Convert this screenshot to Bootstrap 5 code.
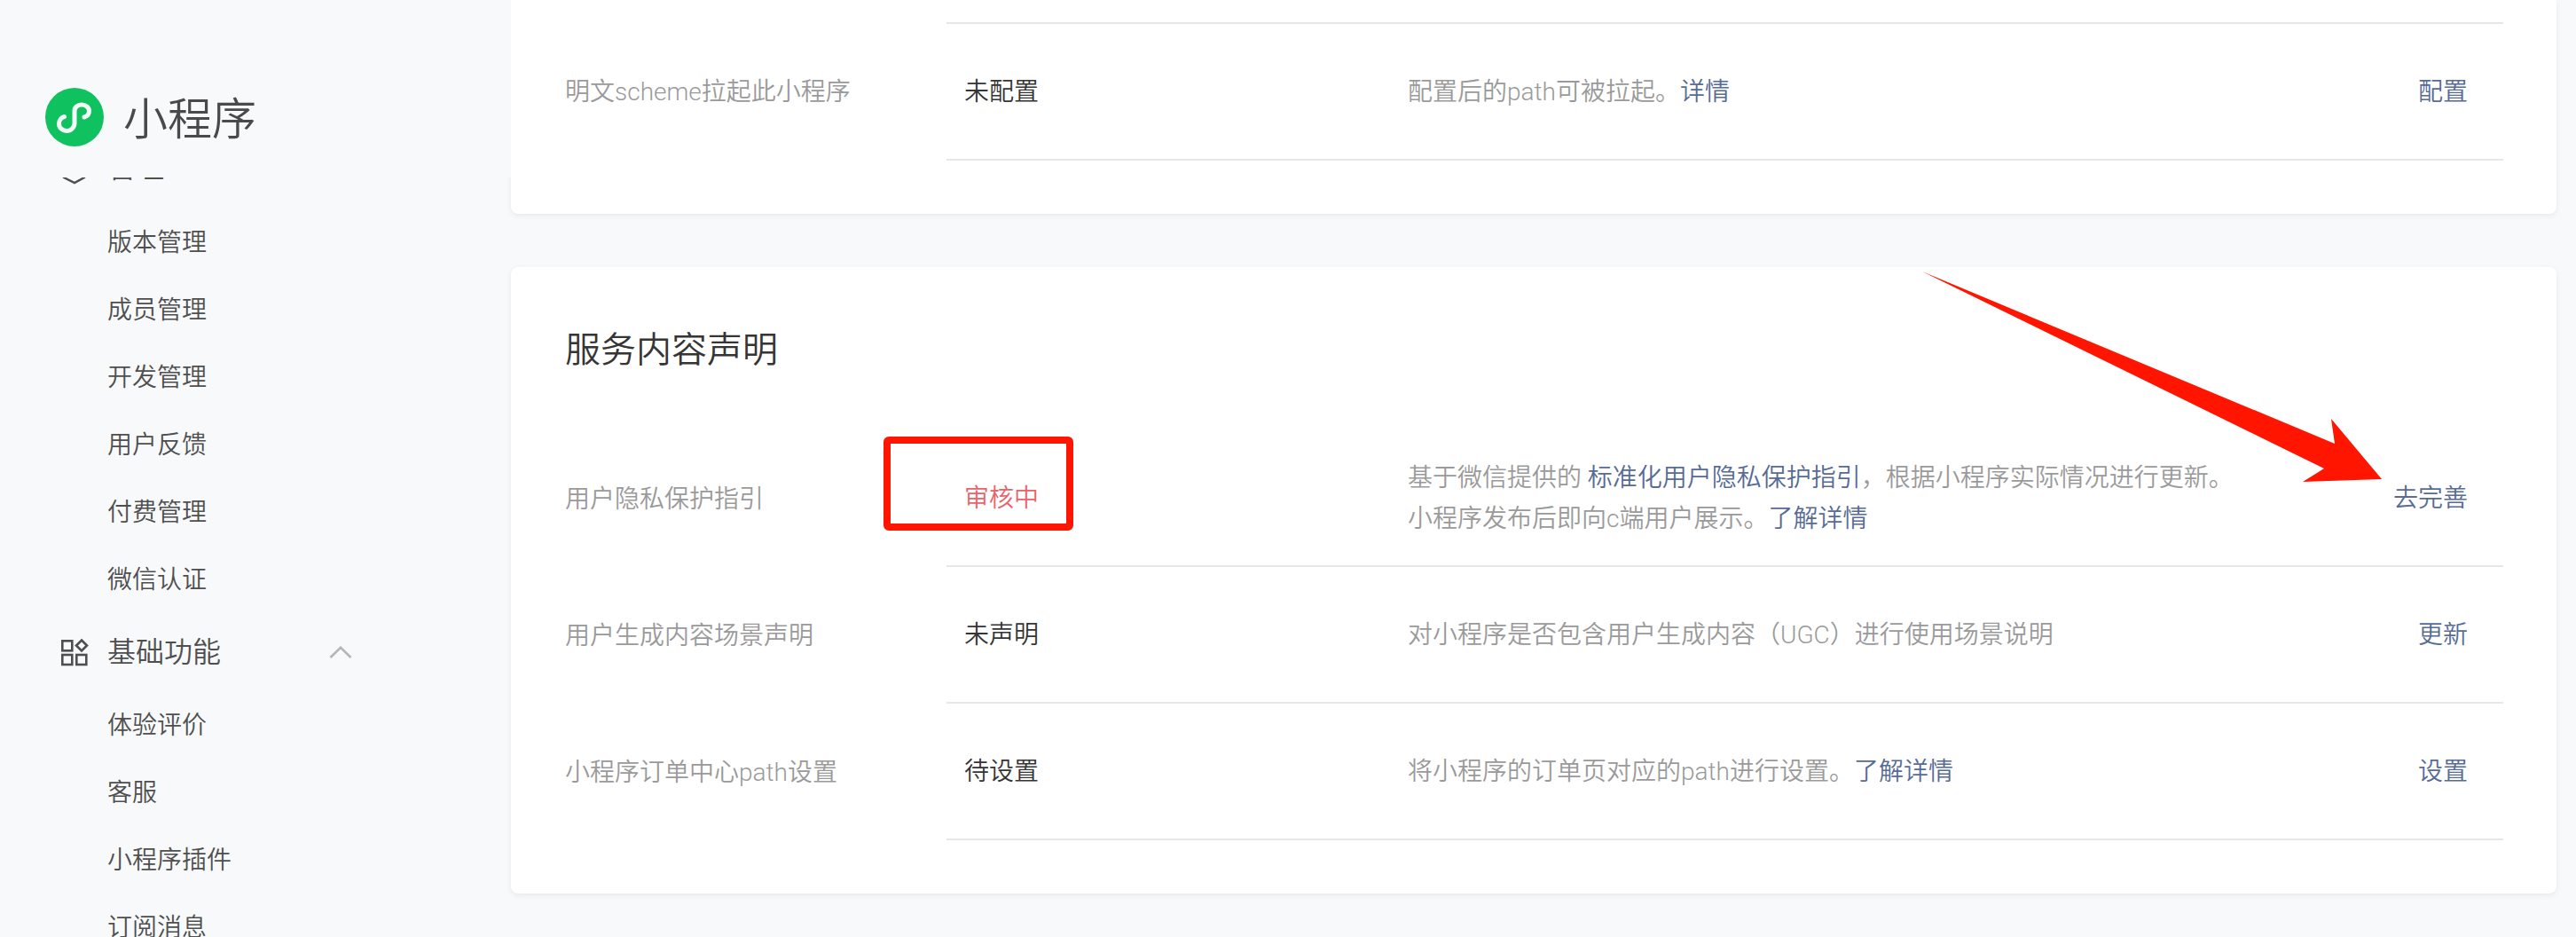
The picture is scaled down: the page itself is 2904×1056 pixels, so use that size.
<!DOCTYPE html>
<html lang="zh-CN">
<head>
    <meta charset="UTF-8">
    <meta name="viewport" content="width=device-width, initial-scale=1.0">
    <title>小程序</title>
    <link href="https://cdn.jsdelivr.net/npm/bootstrap@5.3.0/dist/css/bootstrap.min.css" rel="stylesheet">
    <style>
        body {
            height: 100vh;
            overflow: hidden;
            background: #f8f9fb;
            font-family: "Roboto", "Noto Sans CJK SC", sans-serif;
            font-size: 28px;
            font-weight: 350;
            line-height: 46px;
            color: #353535;
        }

        /* sidebar */
        .side-panel { width: 576px; height: 100vh; overflow: hidden; }
        .side-logo {
            position: relative;
            z-index: 1;
            height: 200px;
            padding: 99px 0 0 51px;
            background: #f8f9fb;
        }
        .side-logo-text { font-size: 50px; line-height: 66px; margin: 3px 0 0 22px; color: #4a4a4a; }
        .side-nav { margin-top: -53px; color: #4f4f4f; }
        .side-group { height: 76px; margin: 6px 0; font-size: 32px; padding-left: 69px; }
        .side-group-first { margin: 4px 0 8px; }
        .side-group-icon { width: 30px; height: 30px; margin-right: 22px; overflow: visible; flex: none; }
        .side-group-arrow { width: 26px; height: 14px; margin-left: auto; margin-right: 179px; }
        .side-item { height: 76px; line-height: 78px; padding-left: 121px; }

        /* cards */
        .page-main { padding-right: 22px; gap: 60px; }
        .panel-card { border: 0; border-radius: 8px; box-shadow: 0 2px 6px rgba(0, 0, 0, .07); }
        .panel-card-first { border-radius: 0 0 8px 8px; padding: 25px 60px 60px 61px; }
        .panel-card-second { padding: 0 60px 60px 61px; }
        .panel-title { font-size: 40px; line-height: 56px; font-weight: 350; margin: 0; padding: 66px 0 62px; }
        .info-row { display: flex; }
        .info-label { width: 430px; flex: none; color: #9a9a9a; align-self: center; padding-top: 1px; }
        .info-body { flex: 1; display: flex; align-items: center; height: 154px; border-bottom: 2px solid #e7e7eb; }
        .info-body-top { border-top: 2px solid #e7e7eb; height: 156px; }
        .info-status { width: 520px; padding: 1px 0 0 20px; flex: none; }
        .info-status-warn { color: #e8636a; }
        .info-desc { flex: 1; color: #9a9a9a; padding-top: 1px; }
        .info-action { padding: 1px 22px 0 0; margin-right: 18px; }
        .page-main a { color: #576b95; text-decoration: none; }

        /* hand-drawn annotation on top of the screenshot */
        .note-layer { position: absolute; left: 0; top: 0; pointer-events: none; }
    </style>
</head>
<body>
    <div class="d-flex">
        <aside class="side-panel flex-shrink-0">
            <div class="side-logo d-flex align-items-start">
                <svg width="66" height="66" viewBox="0 0 66 66">
                    <circle cx="33" cy="33" r="33" fill="#0fc25f"/>
                    <path d="M21.5 32.5C17.5 33.5 15.5 37 15.5 40.5C15.5 45 19.5 48.5 24 48.5C29 48.5 33 44.5 33 40V26C33 22 36.5 19 41 19C45.5 19 49.5 22 49.5 26C49.5 29.5 47.5 32 44 33" fill="none" stroke="#f3fbf6" stroke-width="5" stroke-linecap="round"/>
                </svg>
                <span class="side-logo-text">小程序</span>
            </div>
            <nav class="side-nav">
                <div class="side-group side-group-first d-flex align-items-center">
                    <svg class="side-group-icon" viewBox="0 0 30 30">
                        <path d="M15 2L26 9V26L15 32L3 26V9Z" fill="none" stroke="#4f4f4f" stroke-width="2.5"/>
                    </svg>
                    <span>管理</span>
                </div>
                <div class="side-item">版本管理</div>
                <div class="side-item">成员管理</div>
                <div class="side-item">开发管理</div>
                <div class="side-item">用户反馈</div>
                <div class="side-item">付费管理</div>
                <div class="side-item">微信认证</div>
                <div class="side-group d-flex align-items-center">
                    <svg class="side-group-icon" viewBox="0 0 30 30">
                        <g fill="none" stroke="#4f4f4f" stroke-width="2.6">
                            <rect x="1.3" y="2.3" width="11" height="11"/>
                            <path d="M23 1.5L29 7.5L23 13.5L17 7.5Z"/>
                            <rect x="1.3" y="18" width="11" height="11"/>
                            <rect x="17.3" y="18" width="11" height="11"/>
                        </g>
                    </svg>
                    <span>基础功能</span>
                    <svg class="side-group-arrow" viewBox="0 0 26 14">
                        <path d="M1.5 13L13 1.8L24.5 13" fill="none" stroke="#b5b5b5" stroke-width="2.6"/>
                    </svg>
                </div>
                <div class="side-item">体验评价</div>
                <div class="side-item">客服</div>
                <div class="side-item">小程序插件</div>
                <div class="side-item">订阅消息</div>
            </nav>
        </aside>

        <main class="page-main flex-grow-1 d-flex flex-column">
            <section class="card panel-card panel-card-first">
                <div class="info-row">
                    <div class="info-label">明文scheme拉起此小程序</div>
                    <div class="info-body info-body-top">
                        <div class="info-status">未配置</div>
                        <div class="info-desc">配置后的path可被拉起。<a href="#">详情</a></div>
                        <a class="info-action" href="#">配置</a>
                    </div>
                </div>
            </section>

            <section class="card panel-card panel-card-second">
                <h2 class="panel-title">服务内容声明</h2>
                <div class="info-row">
                    <div class="info-label">用户隐私保护指引</div>
                    <div class="info-body">
                        <div class="info-status info-status-warn">审核中</div>
                        <div class="info-desc">基于微信提供的 <a href="#">标准化用户隐私保护指引</a>，根据小程序实际情况进行更新。<br>小程序发布后即向c端用户展示。<a href="#">了解详情</a></div>
                        <a class="info-action" href="#">去完善</a>
                    </div>
                </div>
                <div class="info-row">
                    <div class="info-label">用户生成内容场景声明</div>
                    <div class="info-body">
                        <div class="info-status">未声明</div>
                        <div class="info-desc">对小程序是否包含用户生成内容（UGC）进行使用场景说明</div>
                        <a class="info-action" href="#">更新</a>
                    </div>
                </div>
                <div class="info-row">
                    <div class="info-label">小程序订单中心path设置</div>
                    <div class="info-body">
                        <div class="info-status">待设置</div>
                        <div class="info-desc">将小程序的订单页对应的path进行设置。<a href="#">了解详情</a></div>
                        <a class="info-action" href="#">设置</a>
                    </div>
                </div>
            </section>
        </main>
    </div>

    <svg class="note-layer" width="2904" height="1056" viewBox="0 0 2904 1056">
        <rect x="1000" y="496" width="206" height="98" rx="2" fill="none" stroke="#ff1500" stroke-width="8"/>
        <polygon points="2167,306 2632,500 2628,472 2685,540 2596,543 2620,528" fill="#ff1500"/>
    </svg>

    <script src="https://cdn.jsdelivr.net/npm/bootstrap@5.3.0/dist/js/bootstrap.bundle.min.js"></script>
</body>
</html>
